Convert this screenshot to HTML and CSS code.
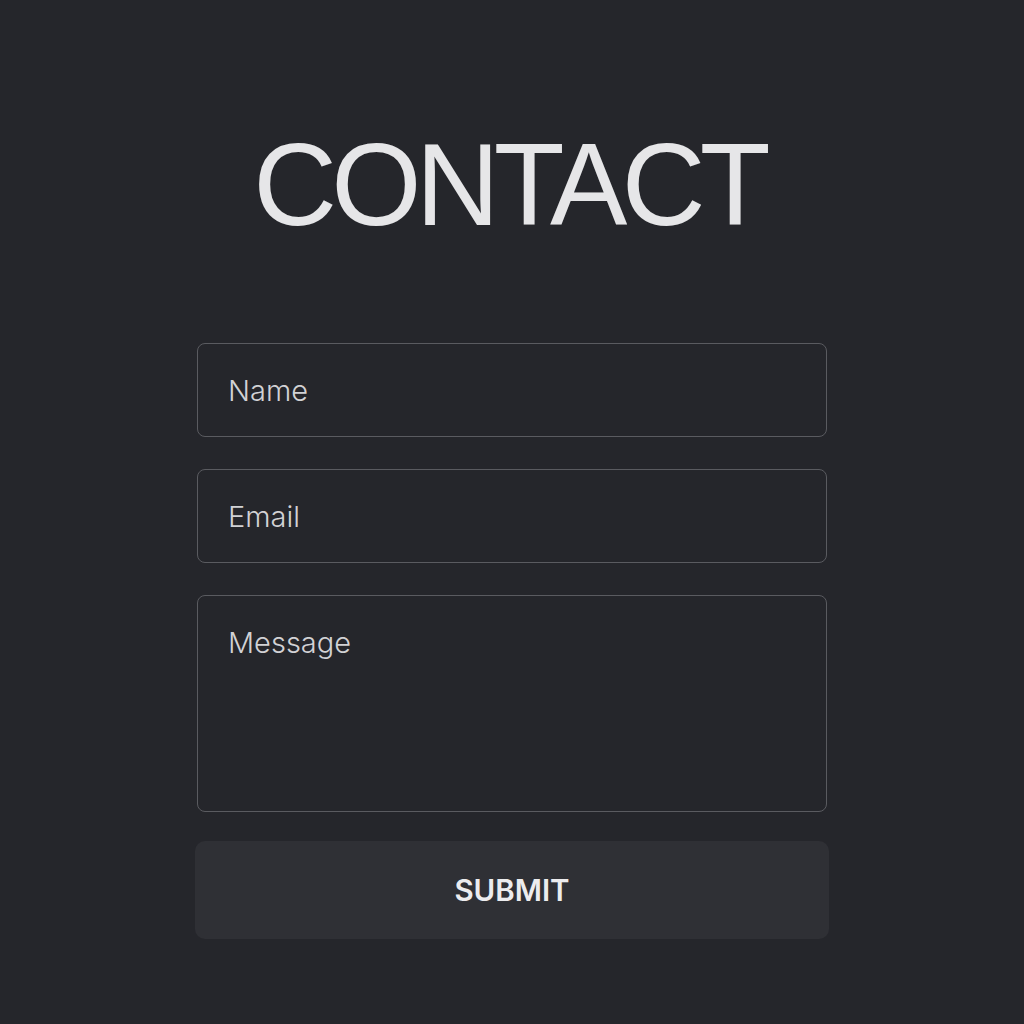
FILE: index.html
```html
<!DOCTYPE html>
<html lang="en">
<head>
<meta charset="utf-8">
<title>Contact</title>
<link rel="stylesheet" href="styles.css">
</head>
<body>
<main class="page">
  <h1 class="title">CONTACT</h1>
  <form class="form">
    <div class="field">Name</div>
    <div class="field">Email</div>
    <div class="field field-message">Message</div>
    <button type="button" class="submit">SUBMIT</button>
  </form>
</main>
</body>
</html>
```
FILE: styles.css
```css
html, body {
  margin: 0;
  padding: 0;
  background: #25262b;
}
body {
  font-family: "Liberation Sans", Arial, sans-serif;
  color: #e4e4e6;
}
.page {
  display: flex;
  flex-direction: column;
  align-items: center;
  min-height: 1024px;
}
.title {
  margin: 130px 0 0 0;
  padding-right: 6px;
  font-weight: 400;
  font-size: 116px;
  line-height: 110px;
  letter-spacing: -5.8px;
  color: #e6e6e8;
}
.form {
  margin-top: 103px;
  width: 630px;
  display: flex;
  flex-direction: column;
  gap: 32px;
}
.field {
  box-sizing: border-box;
  height: 94px;
  border: 1.5px solid #5a5b60;
  border-radius: 8px;
  padding: 0 30px;
  display: flex;
  align-items: center;
  font-family: Inter, "Liberation Sans", sans-serif;
  font-weight: 300;
  font-size: 29px;
  color: #d2d2d5;
}
.field-message {
  height: 217px;
  align-items: flex-start;
  padding-top: 29px;
}
.submit {
  margin: -3px -2px 0 -2px;
  height: 98px;
  border: none;
  border-radius: 10px;
  background: #2f3035;
  font-family: Inter, "Liberation Sans", sans-serif;
  font-weight: 600;
  font-size: 29.5px;
  color: #ececee;
}
```
